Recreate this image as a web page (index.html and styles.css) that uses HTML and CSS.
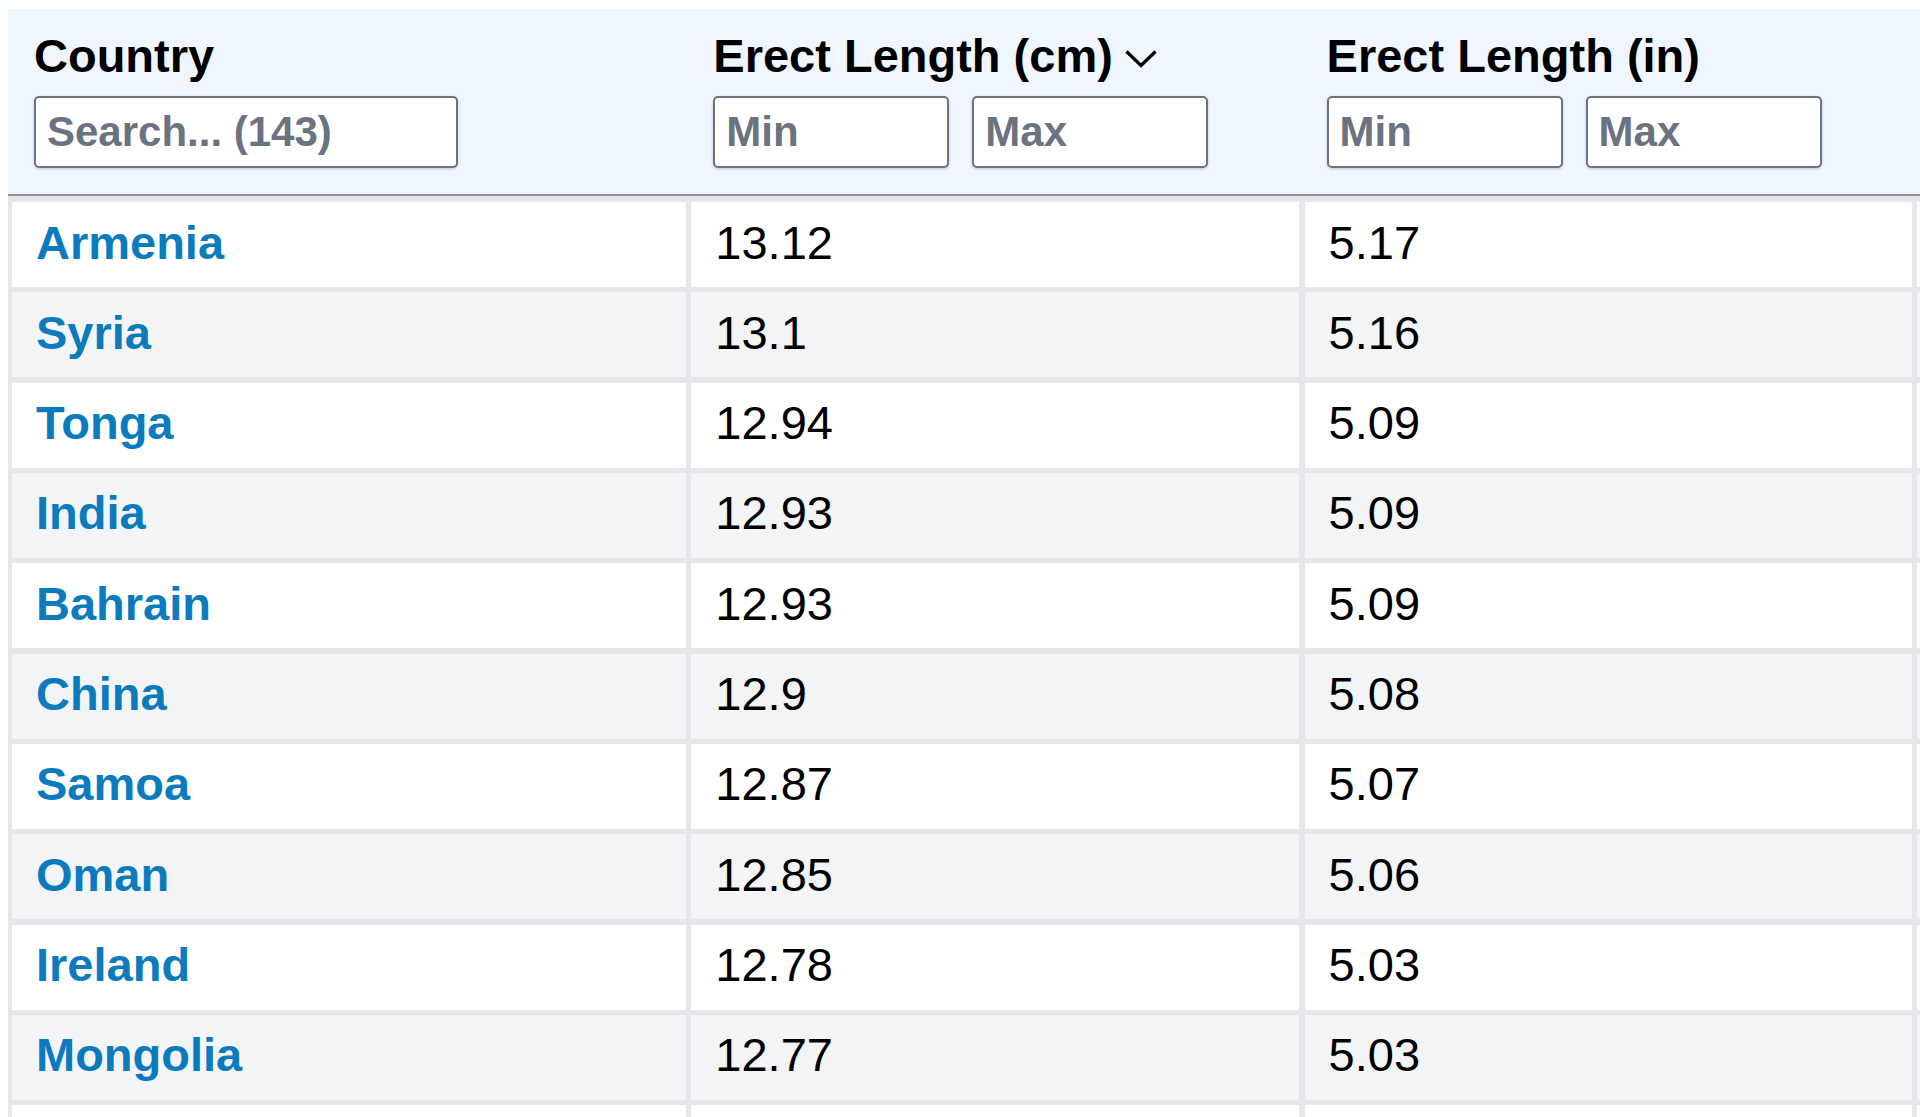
FILE: index.html
```html
<!DOCTYPE html>
<html lang="en">
<head>
<meta charset="utf-8">
<title>Erect Length by Country</title>
<link rel="stylesheet" href="styles.css">
</head>
<body>
<div class="table-wrap">
  <div class="table">
    <div class="thead">
      <div class="th">
        <div class="th-label">Country</div>
        <input class="filter filter-search" type="text" placeholder="Search... (143)">
      </div>
      <div class="th">
        <div class="th-label">Erect Length (cm)<svg class="chevron" width="34" height="19" viewBox="0 0 34 19"><path d="M2.5 2.5 L17 16.5 L31.5 2.5" fill="none" stroke="#000" stroke-width="3.2"/></svg></div>
        <div class="range">
          <input class="filter filter-range" type="text" placeholder="Min">
          <input class="filter filter-range" type="text" placeholder="Max">
        </div>
      </div>
      <div class="th">
        <div class="th-label">Erect Length (in)</div>
        <div class="range">
          <input class="filter filter-range" type="text" placeholder="Min">
          <input class="filter filter-range" type="text" placeholder="Max">
        </div>
      </div>
      <div class="th"></div>
    </div>
    <div class="tbody">
      <div class="tr"><div class="td"><a href="#" class="country">Armenia</a></div><div class="td">13.12</div><div class="td">5.17</div><div class="td"></div></div>
      <div class="tr"><div class="td"><a href="#" class="country">Syria</a></div><div class="td">13.1</div><div class="td">5.16</div><div class="td"></div></div>
      <div class="tr"><div class="td"><a href="#" class="country">Tonga</a></div><div class="td">12.94</div><div class="td">5.09</div><div class="td"></div></div>
      <div class="tr"><div class="td"><a href="#" class="country">India</a></div><div class="td">12.93</div><div class="td">5.09</div><div class="td"></div></div>
      <div class="tr"><div class="td"><a href="#" class="country">Bahrain</a></div><div class="td">12.93</div><div class="td">5.09</div><div class="td"></div></div>
      <div class="tr"><div class="td"><a href="#" class="country">China</a></div><div class="td">12.9</div><div class="td">5.08</div><div class="td"></div></div>
      <div class="tr"><div class="td"><a href="#" class="country">Samoa</a></div><div class="td">12.87</div><div class="td">5.07</div><div class="td"></div></div>
      <div class="tr"><div class="td"><a href="#" class="country">Oman</a></div><div class="td">12.85</div><div class="td">5.06</div><div class="td"></div></div>
      <div class="tr"><div class="td"><a href="#" class="country">Ireland</a></div><div class="td">12.78</div><div class="td">5.03</div><div class="td"></div></div>
      <div class="tr"><div class="td"><a href="#" class="country">Mongolia</a></div><div class="td">12.77</div><div class="td">5.03</div><div class="td"></div></div>
      <div class="tr"><div class="td"></div><div class="td"></div><div class="td"></div><div class="td"></div></div>
    </div>
  </div>
</div>
</body>
</html>
```

FILE: styles.css
```css
html, body {
  margin: 0;
  padding: 0;
  overflow: hidden;
  background: #ffffff;
}

body {
  font-family: "Liberation Sans", Arial, sans-serif;
  color: #000;
}

.table-wrap {
  margin: 9px 0 0 8px;
  width: calc(100vw - 8px);
  overflow: hidden;
}

.table {
  width: 2520px;
}

.thead,
.tbody {
  display: grid;
  grid-template-columns: 674px 608px 607px 600px;
  column-gap: 5.3px;
  padding-left: 4px;
}

.thead {
  background: #eff6ff;
  border-bottom: 2px solid #8a9199;
  padding-top: 20px;
  padding-bottom: 26px;
}

.th {
  padding: 0 22px;
}

.th-label {
  display: flex;
  align-items: center;
  font-size: 47px;
  font-weight: 700;
  line-height: 53px;
  height: 53px;
  margin-bottom: 14px;
  white-space: nowrap;
}

.chevron {
  margin-left: 11px;
  margin-top: 5px;
}

.range {
  display: flex;
  gap: 23px;
}

.filter {
  box-sizing: border-box;
  height: 72px;
  border: 2px solid #6b7280;
  border-radius: 5px;
  background: #fff;
  box-shadow: 0 1px 3px rgba(0, 0, 0, 0.2);
  font-family: "Liberation Sans", Arial, sans-serif;
  font-size: 42px;
  font-weight: 700;
  padding: 0 11px;
  margin: 0;
  display: block;
  outline: none;
}

.filter::placeholder {
  color: #6b7280;
  opacity: 1;
}

.filter-search {
  width: 424px;
}

.filter-range {
  width: 236px;
}

.tbody {
  background: #e5e7eb;
  padding-top: 6px;
  row-gap: 5.33px;
}

.tr {
  display: contents;
}

.td {
  box-sizing: border-box;
  height: 85px;
  background: #ffffff;
  display: flex;
  align-items: center;
  padding: 0 24px 5px;
  font-size: 47px;
  white-space: nowrap;
}

.tr:nth-child(even) .td {
  background: #f3f4f6;
}

.country {
  color: #0b7bbd;
  font-weight: 700;
  text-decoration: none;
}
```
